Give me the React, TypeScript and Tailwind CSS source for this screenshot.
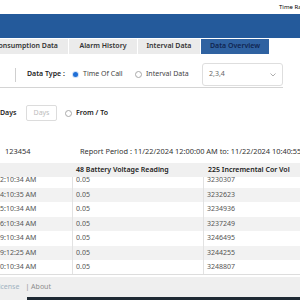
import React from "react";

const rows = [
  ["02:10:34 AM", "0.05", "3230307"],
  ["04:10:35 AM", "0.05", "3232623"],
  ["05:10:34 AM", "0.05", "3234936"],
  ["06:10:34 AM", "0.05", "3237249"],
  ["09:10:34 AM", "0.05", "3246495"],
  ["09:12:25 AM", "0.05", "3244255"],
  ["10:10:34 AM", "0.05", "3248807"],
];

function Radio({ on }: { on?: boolean }) {
  return on ? (
    <span className="flex h-[7px] w-[7px] shrink-0 items-center justify-center rounded-full bg-[#cfe0f7]">
      <span className="block h-[5px] w-[5px] rounded-full bg-[#1f6fd6]" />
    </span>
  ) : (
    <span className="block h-[7px] w-[7px] shrink-0 rounded-full border border-[#a9a9a9] bg-white" />
  );
}

export default function App() {
  return (
    <div
      className="relative h-[300px] w-[300px] overflow-hidden bg-white text-[#333]"
      style={{ fontFamily: "'Noto Sans', Inter, sans-serif" }}
    >
      {/* top bar */}
      <div className="flex h-[14px] items-center whitespace-nowrap pl-[279px] text-[6px] text-black">
        Time Range
      </div>
      {/* blue header */}
      <div className="h-[24px] bg-[#245a9b]" />
      {/* tabs */}
      <div className="ml-[-16px] mt-[1px] flex h-[15px] gap-[1px] whitespace-nowrap text-[7px] font-semibold">
        <div className="flex w-[84px] shrink-0 items-center justify-center bg-[#ebebeb] text-[#333]">Consumption Data</div>
        <div className="flex w-[68px] shrink-0 items-center justify-center bg-[#ebebeb] text-[#333]">Alarm History</div>
        <div className="flex w-[62px] shrink-0 items-center justify-center bg-[#ebebeb] text-[#333]">Interval Data</div>
        <div className="flex w-[68px] shrink-0 items-center justify-center bg-[#2f62a1] text-[#0f2550]">Data Overview</div>
      </div>
      {/* filter row */}
      <div className="mt-[9px] w-[283px] border-b border-[#d4d4d4] pb-[1px]">
        <div className="flex h-[23px] items-center whitespace-nowrap text-[7px]">
          <span className="ml-[15px] h-[14px] w-px shrink-0 bg-[#cfcfcf]" />
          <span className="ml-[11px] w-[45px] shrink-0 font-semibold text-[#222]">Data Type :</span>
          <Radio on />
          <span className="ml-[4px] w-[52px] shrink-0 text-[#444]">Time Of Call</span>
          <Radio />
          <span className="ml-[4px] text-[#444]">Interval Data</span>
          <div className="ml-auto flex h-[23px] w-[81px] shrink-0 items-center justify-between rounded-[3px] border border-[#dedede] px-[6px] text-[#666]">
            <span>2,3,4</span>
            <svg width="6" height="4" viewBox="0 0 6 4" fill="none">
              <path d="M0.5 0.5 L3 3 L5.5 0.5" stroke="#999" strokeWidth="0.8" />
            </svg>
          </div>
        </div>
      </div>
      {/* days row */}
      <div className="mt-[17px] flex h-[16px] items-center whitespace-nowrap text-[7px]">
        <span className="w-[26px] shrink-0 font-semibold text-[#222]">Days</span>
        <div className="flex h-[16px] w-[31px] shrink-0 items-center justify-center rounded-[2px] border border-[#dcdcdc] text-[#bdbdbd]">
          Days
        </div>
        <span className="ml-[8px] flex items-center">
          <Radio />
        </span>
        <span className="ml-[4px] font-semibold text-[#222]">From / To</span>
      </div>
      {/* report row */}
      <div className="mt-[26px] flex h-[10px] items-center whitespace-nowrap text-[7.4px] text-[#333]">
        <span className="w-[80px] shrink-0 pl-[5px]">123454</span>
        <span className="shrink-0">Report Period : 11/22/2024 12:00:00 AM to: 11/22/2024 10:40:55 AM</span>
      </div>
      {/* table */}
      <div className="mt-[6px] grid h-[14px] grid-cols-[73px_131px_96px] items-center bg-[#f0f0f0] whitespace-nowrap text-[7px] font-semibold text-[#222]">
        <span />
        <span className="pl-[3px]">48 Battery Voltage Reading</span>
        <span className="pl-[4px]">225 Incremental Cor Vol</span>
      </div>
      <div className="h-[98px] overflow-hidden border-b border-[#dddddd]">
        <div className="-mt-[4px]">
          {rows.map((r, i) => (
            <div
              key={i}
              className={`grid h-[14.5px] grid-cols-[73px_131px_96px] items-center whitespace-nowrap text-[7px] text-[#555] ${
                i % 2 === 1 ? "bg-[#f2f2f2]" : "bg-white"
              }`}
            >
              <span className="flex h-full items-center overflow-hidden border-r border-[#e2e2e2]">
                <span className="-ml-[4px]">{r[0]}</span>
              </span>
              <span className="flex h-full items-center border-r border-[#e2e2e2] pl-[3px]">{r[1]}</span>
              <span className="pl-[3px]">{r[2]}</span>
            </div>
          ))}
        </div>
      </div>
      {/* footer */}
      <div className="mt-[2px] flex h-[20px] items-center whitespace-nowrap bg-[#efefef] text-[7px]">
        <span className="-ml-[5px] text-[#9fb2c0]">License</span>
        <span className="ml-[6px] text-[#8c8c8c]">| About</span>
      </div>
      <div className="flex h-[4px]">
        <div className="w-[27px] bg-[#efefef]" />
        <div className="flex-1 bg-[#1f2a34]" />
      </div>
    </div>
  );
}
